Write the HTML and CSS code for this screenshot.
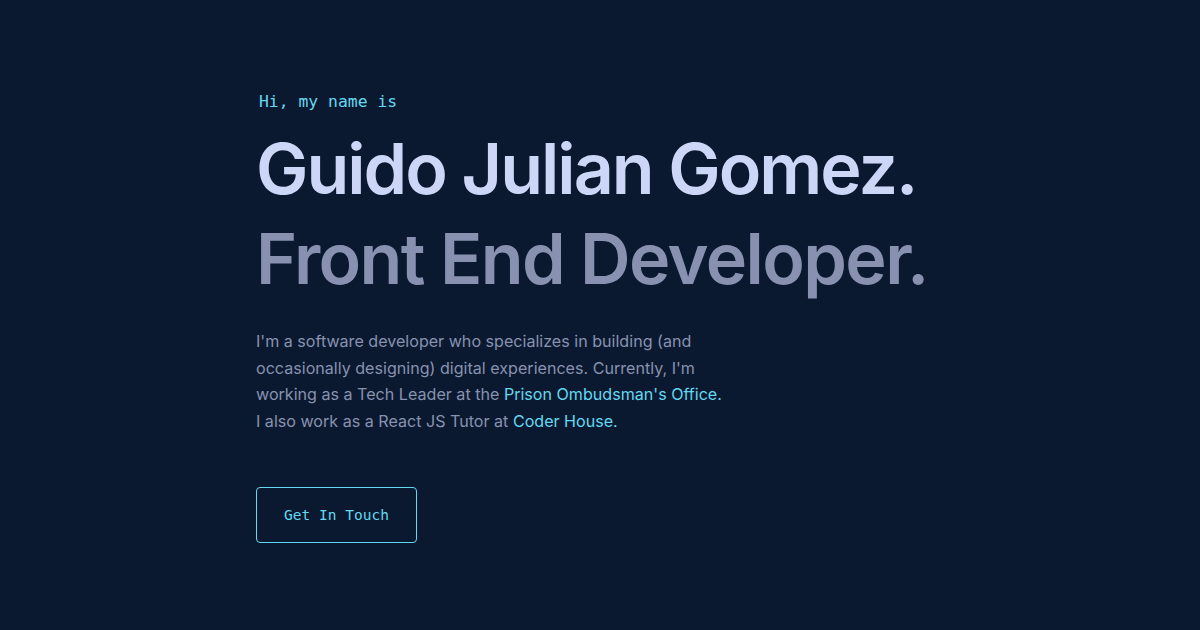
FILE: index.html
```html
<!DOCTYPE html>
<html lang="en">
<head>
<meta charset="utf-8">
<link rel="stylesheet" href="styles.css">
</head>
<body>
<main class="hero">
  <h1 class="intro">Hi, my name is</h1>
  <h2 class="big name">Guido Julian Gomez.</h2>
  <h3 class="big role">Front End Developer.</h3>
  <p class="bio">I'm a software developer who specializes in building (and occasionally designing) digital experiences. Currently, I'm working as a Tech Leader at the <a href="#">Prison Ombudsman's Office.</a> I also work as a React JS Tutor at <a href="#">Coder House.</a></p>
  <a class="cta" href="#">Get In Touch</a>
</main>
</body>
</html>
```
FILE: styles.css
```css
html, body {
  margin: 0;
  padding: 0;
  background: #0a192f;
  height: 100%;
}
body {
  font-family: Inter, "Noto Sans", sans-serif;
}
.hero {
  display: flex;
  flex-direction: column;
  align-items: flex-start;
  padding: 89px 0 0 256px;
}
.intro {
  margin: 0 0 9px 3px;
  font-family: "DejaVu Sans Mono", monospace;
  font-size: 16.4px;
  font-weight: 400;
  color: #64d8f0;
  line-height: 26px;
}
.big {
  margin: 0;
  font-size: 70px;
  font-weight: 600;
  line-height: 90px;
  letter-spacing: -2px;
}
.name { color: #ccd6f6; }
.role { color: #8892b0; letter-spacing: -1.6px; }
.bio {
  margin: 24px 0 0;
  max-width: 468px;
  font-size: 16.1px;
  line-height: 26.5px;
  color: #8892b0;
}
.bio a {
  color: #64d8f0;
  text-decoration: none;
}
.cta {
  margin-top: 53px;
  box-sizing: border-box;
  width: 161px;
  height: 56px;
  display: flex;
  align-items: center;
  justify-content: center;
  border: 1px solid #64d8f0;
  border-radius: 4px;
  color: #64d8f0;
  text-decoration: none;
  font-family: "DejaVu Sans Mono", monospace;
  font-size: 14.5px;
}
```
